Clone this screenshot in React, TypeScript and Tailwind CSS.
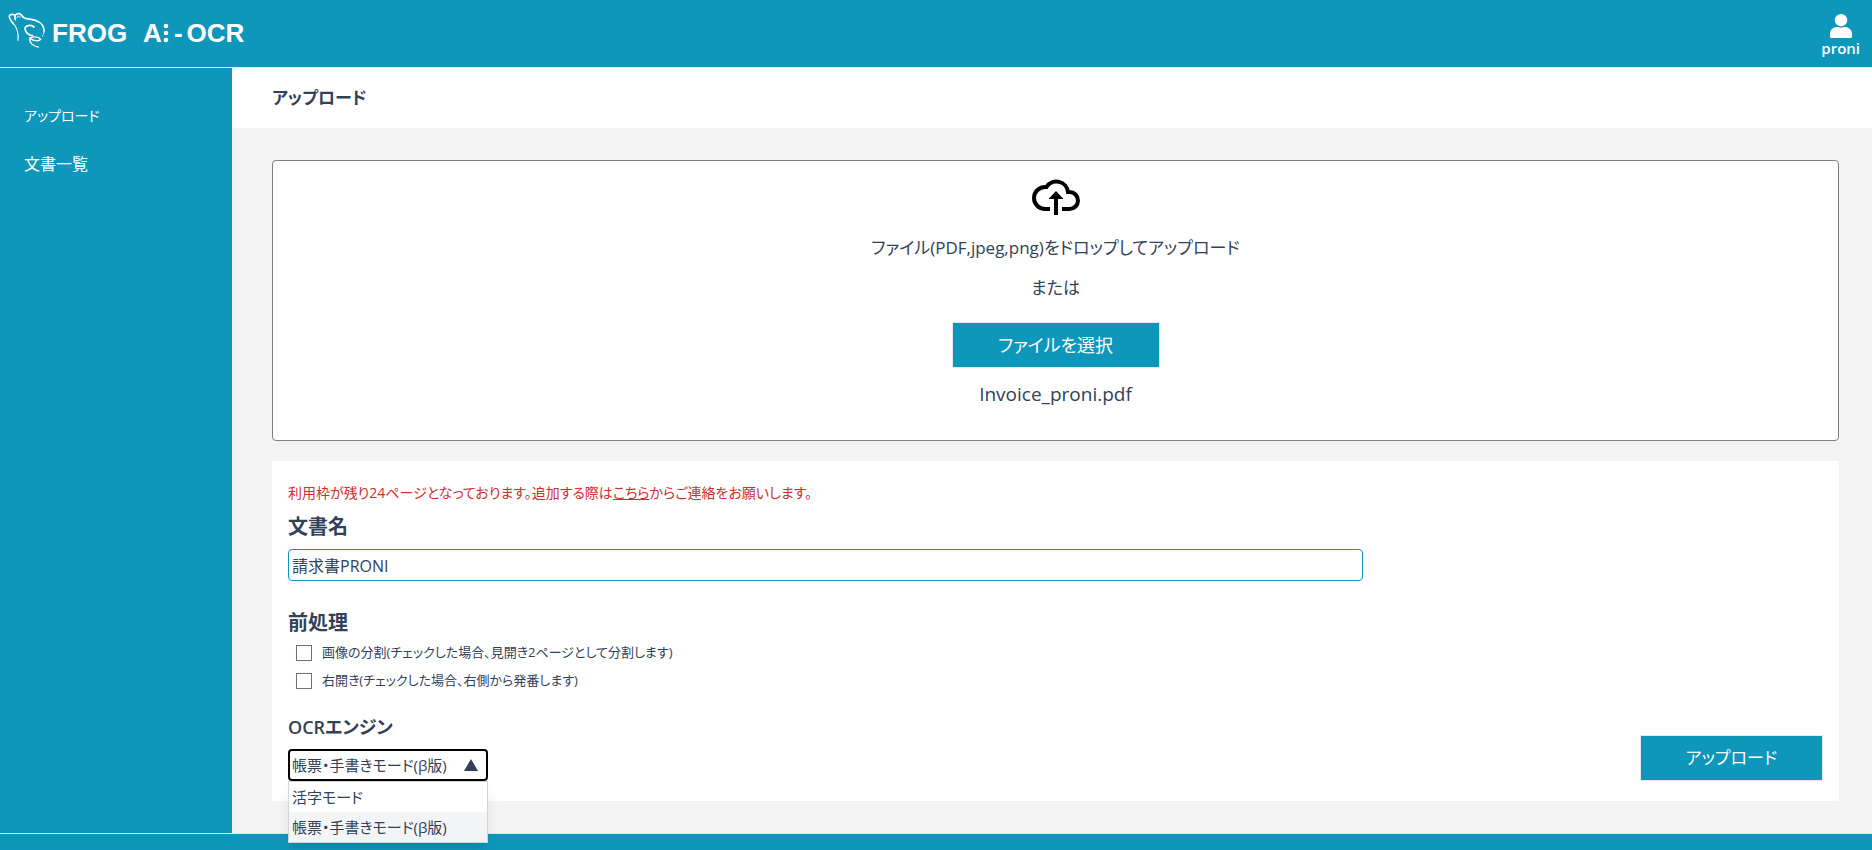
import { useState } from "react";

const engines = ["活字モード", "帳票・手書きモード(β版)"];

const preprocessOptions = [
  { id: "split", label: "画像の分割(チェックした場合、見開き2ページとして分割します)" },
  { id: "right", label: "右開き(チェックした場合、右側から発番します)" },
];

function FrogMark() {
  return (
    <svg
      className="mb-1.5 h-9 w-12"
      viewBox="0 33 144 108"
      fill="none"
      stroke="white"
      strokeLinecap="round"
      aria-hidden="true"
    >
      <path strokeWidth="5" d="M44 42C36 38 27 40 28 48C29 55 34 60 40 68" />
      <path strokeWidth="3.5" d="M34 62C46 72 57 90 54 118" />
      <path strokeWidth="5" d="M46 56C41 45 48 37 57 38C65 39 66 47 73 51C84 56 100 53 115 62" />
      <path strokeWidth="3" d="M51 50C53 44 59 44 61 49" />
      <path strokeWidth="4.5" d="M115 62C126 68 133 80 132 93" />
      <path strokeWidth="3.5" strokeDasharray="1 6" d="M131 97L128 105" />
      <path strokeWidth="5" d="M102 78C92 70 76 73 75 83C76 94 86 103 97 104" />
      <path strokeWidth="4" d="M92 110C104 105 119 109 122 115C118 121 99 121 90 111C87 124 98 136 115 138" />
    </svg>
  );
}

function Logo() {
  return (
    <a
      href="#"
      aria-label="FROG Ai-OCR"
      className="flex items-center pb-0.5 font-['Liberation_Sans',Arial,sans-serif] text-[26px] leading-[30px] font-bold text-white"
    >
      <FrogMark />
      <span className="ml-1">FROG</span>
      <span className="ml-4">A</span>
      <svg className="h-5 w-2" viewBox="0 0 8 20" fill="white" aria-hidden="true">
        <circle cx="4" cy="3" r="2.3" />
        <circle cx="4" cy="10" r="2.3" />
        <circle cx="4" cy="17" r="2.3" />
      </svg>
      <span className="ml-1">-</span>
      <span className="ml-1">OCR</span>
    </a>
  );
}

function UserIcon() {
  return (
    <svg className="h-6 w-6" viewBox="0 0 24 24" fill="white" aria-hidden="true">
      <circle cx="12" cy="6.2" r="6.2" />
      <path d="M1 22V20C1 16 4 13 8 13C9.5 13 10.5 13.7 12 13.7S14.5 13 16 13C20 13 23 16 23 20V22C23 23.5 22.5 24 21.5 24H2.5C1.5 24 1 23.5 1 22Z" />
    </svg>
  );
}

function CloudUploadIcon() {
  return (
    <svg className="h-12 w-12" viewBox="0 0 48 48" aria-hidden="true">
      <path
        fill="none"
        stroke="black"
        strokeWidth="4"
        d="M18 35H13A11 11 0 0 1 13 13H14.5A11.7 11.7 0 0 1 36 18H37.5A8.5 8.5 0 0 1 37.5 35H30"
      />
      <path fill="black" d="M24 17L31.5 25H26V41H22V25H16.5Z" />
    </svg>
  );
}

export default function App() {
  const [name, setName] = useState("請求書PRONI");
  const [engine, setEngine] = useState(engines[1]);

  return (
    <div className="flex min-h-screen flex-col bg-[#0e97bb] font-['Open_Sans','Noto_Sans_CJK_JP',sans-serif] text-base text-slate-700 [font-feature-settings:'palt']">
      <header className="flex h-[68px] items-center justify-between border-b border-gray-200 pr-3">
        <Logo />
        <button type="button" className="flex flex-col items-center pt-1 font-semibold text-white">
          <UserIcon />
          <span className="text-[15px] leading-5">proni</span>
        </button>
      </header>

      <div className="flex flex-1">
        <nav className="w-[232px] shrink-0 px-6 pt-9 text-white">
          <ul className="space-y-6">
            <li>
              <a href="#" className="block text-sm leading-6">
                アップロード
              </a>
            </li>
            <li>
              <a href="#" className="block leading-6">
                文書一覧
              </a>
            </li>
          </ul>
        </nav>

        <main className="min-w-0 flex-1 bg-[#f3f3f3]">
          <div className="flex h-[60px] items-center bg-white px-10">
            <h1 className="text-[17px] font-semibold">アップロード</h1>
          </div>

          <div className="flex flex-col gap-5 py-8 pr-[33px] pl-10">
            <section className="flex flex-col items-center rounded border border-[#808080] bg-white pt-[13px] pb-8 text-[17px] leading-7">
              <CloudUploadIcon />
              <p className="mt-3">ファイル(PDF,jpeg,png)をドロップしてアップロード</p>
              <p className="mt-3">または</p>
              <button
                type="button"
                className="mt-5 h-[46px] w-52 border border-gray-200 bg-[#0e97bb] text-lg text-white"
              >
                ファイルを選択
              </button>
              <p className="mt-3 text-[19px] leading-7">Invoice_proni.pdf</p>
            </section>

            <form className="flex items-end justify-between bg-white px-4 py-5">
              <div className="w-7/10">
                <p className="text-sm leading-6 text-[#cc2f2f]">
                  利用枠が残り24ページとなっております。追加する際は
                  <a href="#" className="underline">
                    こちら
                  </a>
                  からご連絡をお願いします。
                </p>

                <label htmlFor="doc-name" className="mt-2 block text-xl font-semibold">
                  文書名
                </label>
                <input
                  id="doc-name"
                  value={name}
                  onChange={(e) => setName(e.target.value)}
                  className="mt-2 block h-8 w-full rounded border border-[#0e97bb] px-[3px]"
                />

                <h2 className="mt-7 text-xl font-semibold">前処理</h2>
                <div className="mt-0.5 px-2">
                  {preprocessOptions.map((option) => (
                    <label key={option.id} htmlFor={option.id} className="flex h-7 items-center gap-2.5 text-[13px]">
                      <input
                        id={option.id}
                        type="checkbox"
                        className="h-4 w-4 appearance-none border border-gray-500 bg-white checked:bg-[#0e97bb]"
                      />
                      {option.label}
                    </label>
                  ))}
                </div>

                <label htmlFor="engine" className="mt-[18px] block text-lg leading-7 font-semibold">
                  OCRエンジン
                </label>
                <div className="relative mt-2 w-[200px] text-[15px]">
                  <select
                    id="engine"
                    value={engine}
                    onChange={(e) => setEngine(e.target.value)}
                    className="block h-8 w-full appearance-none rounded border-2 border-black bg-white px-0.5"
                  >
                    {engines.map((item) => (
                      <option key={item}>{item}</option>
                    ))}
                  </select>
                  <svg
                    className="pointer-events-none absolute top-2.5 right-2.5 h-3 w-3.5 fill-slate-700"
                    viewBox="0 0 14 12"
                    aria-hidden="true"
                  >
                    <path d="M7 0L14 12H0Z" />
                  </svg>
                  <ul className="absolute top-full left-0 z-10 w-full border border-gray-300 bg-white shadow-lg">
                    {engines.map((item) => (
                      <li key={item} className={item === engine ? "bg-gray-100" : "bg-white"}>
                        <button
                          type="button"
                          onClick={() => setEngine(item)}
                          className="block h-[30px] w-full px-[3px] text-left"
                        >
                          {item}
                        </button>
                      </li>
                    ))}
                  </ul>
                </div>
              </div>

              <button
                type="submit"
                className="h-[46px] w-[183px] border border-gray-200 bg-[#0e97bb] text-[17px] text-white"
              >
                アップロード
              </button>
            </form>
          </div>
        </main>
      </div>

      <footer className="h-[18px] border-t border-gray-200" />
    </div>
  );
}
